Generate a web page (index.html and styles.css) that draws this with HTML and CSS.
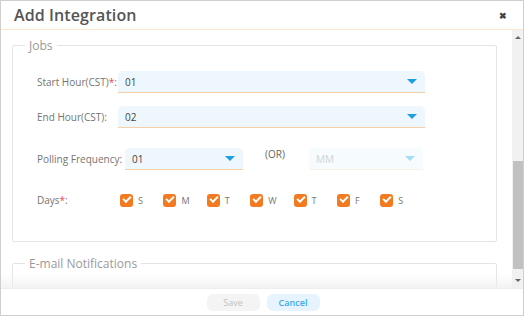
FILE: index.html
```html
<!DOCTYPE html>
<html lang="en">
<head>
    <meta charset="UTF-8">
    <meta name="viewport" content="width=device-width, initial-scale=1.0">
    <title>Add Integration</title>
    <link rel="stylesheet" href="styles.css">
</head>
<body>
    <div class="modal">
        <div class="modal-header">
            <div class="modal-title">Add Integration</div>
            <div class="close">&#10006;</div>
        </div>

        <div class="modal-body">
            <div class="content">
                <fieldset class="group">
                    <legend>Jobs</legend>

                    <div class="row">
                        <label class="field-label">Start Hour(CST)<span class="req">*</span>:</label>
                        <div class="select wide"><span>01</span><i class="caret"></i></div>
                    </div>

                    <div class="row">
                        <label class="field-label">End Hour(CST):</label>
                        <div class="select wide"><span>02</span><i class="caret"></i></div>
                    </div>

                    <div class="row polling">
                        <label class="field-label auto">Polling Frequency:</label>
                        <div class="select small"><span>01</span><i class="caret"></i></div>
                        <div class="or">(OR)</div>
                        <div class="select mm disabled"><span>MM</span><i class="caret"></i></div>
                    </div>

                    <div class="row days">
                        <label class="field-label">Days<span class="req">*</span>:</label>
                        <div class="day-list">
                            <div class="day"><span class="check"></span>S</div>
                            <div class="day"><span class="check"></span>M</div>
                            <div class="day"><span class="check"></span>T</div>
                            <div class="day"><span class="check"></span>W</div>
                            <div class="day"><span class="check"></span>T</div>
                            <div class="day"><span class="check"></span>F</div>
                            <div class="day"><span class="check"></span>S</div>
                        </div>
                    </div>
                </fieldset>

                <fieldset class="group email">
                    <legend>E-mail Notifications</legend>
                </fieldset>
                <div class="fade"></div>
            </div>

            <div class="scrollbar">
                <div class="arrow up"></div>
                <div class="track">
                    <div class="thumb"></div>
                </div>
                <div class="arrow down"></div>
            </div>
        </div>

        <div class="modal-footer">
            <button class="btn save">Save</button>
            <button class="btn cancel">Cancel</button>
        </div>
    </div>
</body>
</html>
```

FILE: styles.css
```css
body {
    font-family: 'Open Sans', 'Noto Sans', sans-serif;
    margin: 0;
    padding: 0;
    background: #fff;
}

.modal {
    width: 522px;
    height: 314px;
    border: 1px solid #cfcfcf;
    display: flex;
    flex-direction: column;
    overflow: hidden;
}

.modal-header {
    height: 28px;
    flex: none;
    display: flex;
    align-items: center;
    justify-content: space-between;
    padding: 0 16px 0 13px;
    border-bottom: 1px solid #fde6cf;
}

.modal-title {
    font-size: 16px;
    font-weight: 600;
    color: #555;
    letter-spacing: 0.1px;
}

.close {
    font-size: 9px;
    color: #444;
    font-weight: 700;
}

.modal-body {
    height: 258px;
    flex: none;
    display: flex;
    border-bottom: 1px solid #ededed;
}

.content {
    flex: 1;
    padding: 7px 15px 0 11px;
    overflow: hidden;
    position: relative;
}

.fade {
    position: absolute;
    left: 0;
    right: 0;
    bottom: 0;
    height: 14px;
    background: linear-gradient(rgba(240, 240, 240, 0), rgba(240, 240, 240, 0.8));
}

.group {
    margin: 0;
    border: 1px solid #e4e4e4;
    border-radius: 2px;
    padding: 17px 0 34px 24px;
}

.group legend {
    font-size: 12px;
    color: #9a9a9a;
    margin-left: -12px;
    padding: 0 4px;
}

.group.email {
    margin-top: 13px;
    height: 60px;
}

.row {
    display: flex;
    align-items: center;
    margin-bottom: 13px;
}

.row.polling {
    margin-top: 20px;
    margin-bottom: 23px;
}

.field-label {
    width: 81px;
    flex: none;
    font-size: 10px;
    color: #747474;
}

.field-label.auto {
    width: auto;
    margin-right: 3px;
}

.req {
    color: #e84a4a;
}

.select {
    height: 21px;
    background: #eef7fd;
    border-bottom: 1px solid #f6cfa9;
    border-radius: 5px 5px 0 0;
    display: flex;
    align-items: center;
    justify-content: space-between;
    padding: 0 8px 0 7px;
    box-sizing: content-box;
    font-size: 10px;
    color: #444;
}

.select.wide {
    width: 292px;
}

.select.small {
    width: 103px;
}

.select.mm {
    width: 99px;
}

.select.disabled {
    background: #f6fbfe;
    border-bottom-color: #fdf1e6;
    color: #d4d4d4;
}

.caret {
    width: 0;
    height: 0;
    border-left: 5px solid transparent;
    border-right: 5px solid transparent;
    border-top: 5px solid #1d9fe4;
}

.disabled .caret {
    border-top-color: #a8dbf4;
}

.or {
    font-size: 10px;
    color: #666;
    margin: -10px 24px 0 22px;
}

.days {
    margin-bottom: 0;
}

.day-list {
    display: flex;
    margin-left: 2px;
}

.day {
    width: 43.4px;
    display: flex;
    align-items: center;
    font-size: 9px;
    color: #777;
}

.check {
    width: 13px;
    height: 13px;
    border-radius: 3px;
    background: #f47a20;
    margin-right: 5px;
    position: relative;
}

.check::after {
    content: "";
    position: absolute;
    left: 3px;
    top: 2px;
    width: 6px;
    height: 3px;
    border-left: 2px solid #fff;
    border-bottom: 2px solid #fff;
    transform: rotate(-45deg);
}

.scrollbar {
    width: 11px;
    flex: none;
    background: #f1f1f1;
    display: flex;
    flex-direction: column;
    align-items: center;
}

.arrow {
    width: 0;
    height: 0;
    border-left: 3px solid transparent;
    border-right: 3px solid transparent;
    margin: 6px 0;
}

.arrow.up {
    border-bottom: 3px solid #666;
}

.arrow.down {
    border-top: 3px solid #666;
}

.track {
    flex: 1;
    width: 100%;
    display: flex;
    flex-direction: column;
    justify-content: flex-end;
}

.thumb {
    height: 108px;
    margin: 0 0 4px 1px;
    background: #c1c1c1;
}

.modal-footer {
    flex: 1;
    display: flex;
    justify-content: center;
    align-items: center;
    gap: 7px;
    padding-left: 2px;
}

.btn {
    width: 53px;
    height: 17px;
    border: none;
    border-radius: 6px;
    font-family: inherit;
    font-size: 9px;
    padding: 0;
    cursor: pointer;
}

.btn.save {
    background: #f4f4f4;
    color: #c2c2c2;
}

.btn.cancel {
    background: #e7f4fd;
    color: #39a9ef;
    font-weight: 600;
}
```
